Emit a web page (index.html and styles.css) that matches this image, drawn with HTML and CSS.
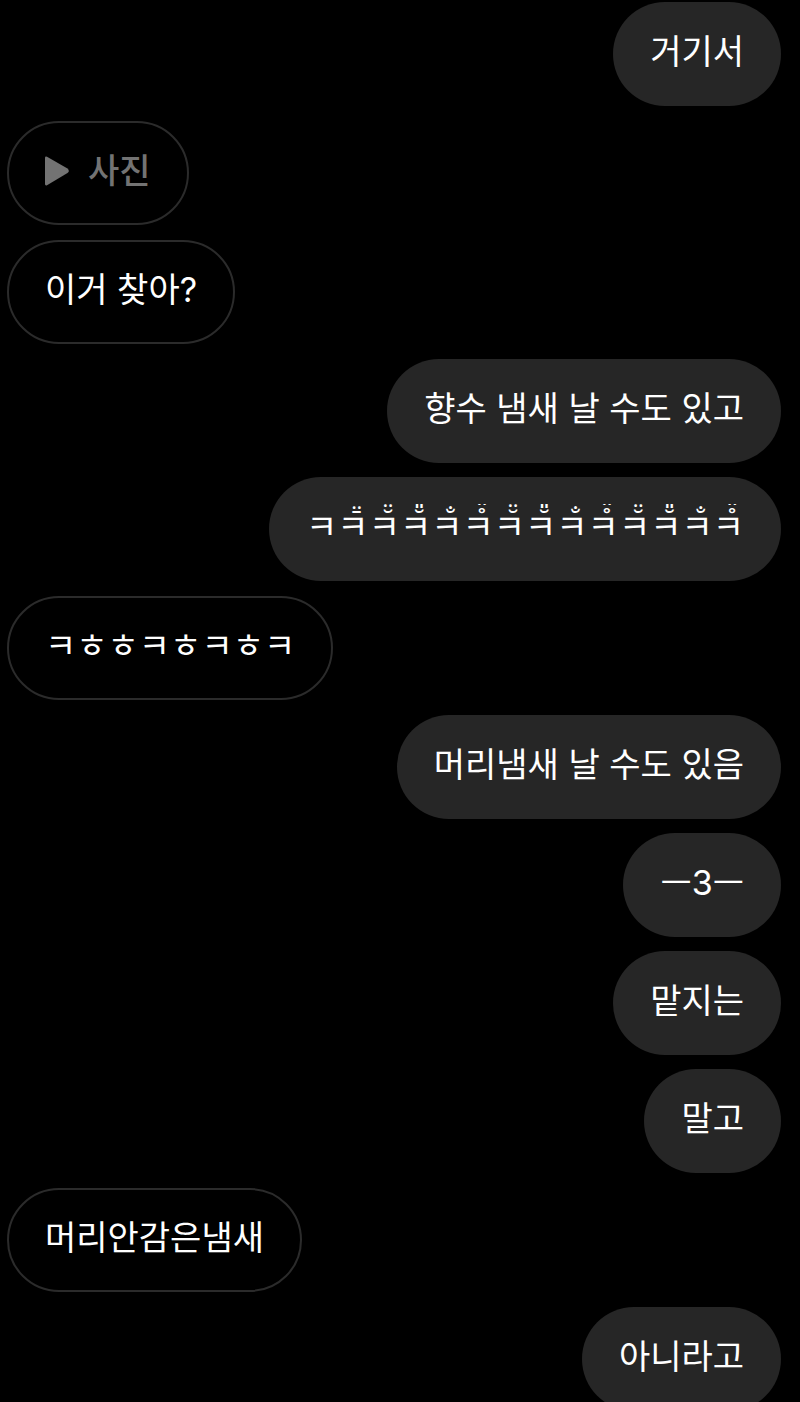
FILE: index.html
```html
<!DOCTYPE html>
<html lang="ko">
<head>
<meta charset="utf-8">
<meta name="viewport" content="width=device-width, initial-scale=1">
<title>대화</title>
<link rel="stylesheet" href="styles.css">
</head>
<body>
<main class="chat">
<p class="bubble sent">거기서</p>
<button class="bubble received photo" type="button"><svg class="play" viewBox="0 0 24 30" aria-hidden="true"><path d="M0 2Q0 0 2 .7L22.500 12.500Q25.200 15 22.500 17L2 29.300Q0 30 0 28Z"/></svg>사진</button>
<p class="bubble received">이거 찾아?</p>
<p class="bubble sent">향수 냄새 날 수도 있고</p>
<p class="bubble sent"><span class="faces">ㅋ<span class="face">ㅋ<span class="marks">&nbsp;&#x304;&#x308;</span></span><span class="face">ㅋ<span class="marks">&nbsp;&#x306;&#x308;</span></span><span class="face">ㅋ<span class="marks">&nbsp;&#x306;&#x30e;</span></span><span class="face">ㅋ<span class="marks">&nbsp;&#x310;&#x308;</span></span><span class="face">ㅋ<span class="marks">&nbsp;&#x30a;&#x308;</span></span><span class="face">ㅋ<span class="marks">&nbsp;&#x306;&#x308;</span></span><span class="face">ㅋ<span class="marks">&nbsp;&#x306;&#x30e;</span></span><span class="face">ㅋ<span class="marks">&nbsp;&#x310;&#x308;</span></span><span class="face">ㅋ<span class="marks">&nbsp;&#x30a;&#x308;</span></span><span class="face">ㅋ<span class="marks">&nbsp;&#x306;&#x308;</span></span><span class="face">ㅋ<span class="marks">&nbsp;&#x306;&#x30e;</span></span><span class="face">ㅋ<span class="marks">&nbsp;&#x310;&#x308;</span></span><span class="face">ㅋ<span class="marks">&nbsp;&#x30a;&#x308;</span></span></span></p>
<p class="bubble received">ㅋㅎㅎㅋㅎㅋㅎㅋ</p>
<p class="bubble sent">머리냄새 날 수도 있음</p>
<p class="bubble sent">ㅡ3ㅡ</p>
<p class="bubble sent">맡지는</p>
<p class="bubble sent">말고</p>
<p class="bubble received">머리안감은냄새</p>
<p class="bubble sent">아니라고</p>
</main>
</body>
</html>
```
FILE: styles.css
```css
* {
  box-sizing: border-box;
}

body {
  margin: 0;
  background: #000;
}

.chat {
  display: flex;
  flex-direction: column;
  gap: 15px;
  height: 100vh;
  padding: 2px 19px 0 7px;
  overflow: hidden;
}

.bubble {
  display: flex;
  flex-shrink: 0;
  align-items: center;
  min-height: 104px;
  margin: 0;
  padding: 27px 37px 31px;
  border: 0;
  border-radius: 52px;
  color: #fff;
  background: none;
  font: 400 34px/46px Inter, "Noto Sans CJK KR", sans-serif;
}

.sent {
  align-self: flex-end;
  background: #262626;
}

.sent + .sent {
  margin-top: -1px;
}

.received {
  align-self: flex-start;
  padding: 25px 36px 29px;
  border: 2px solid #2b2b2b;
}

.photo {
  gap: 19px;
  color: #737373;
  font-weight: 500;
}

.play {
  width: 24px;
  height: 30px;
  fill: currentColor;
}

.faces {
  overflow: hidden;
}

.face {
  display: inline-block;
  position: relative;
}

.marks {
  position: absolute;
  bottom: 8px;
  left: 0;
  width: 100%;
  font: 28px/46px "Noto Sans", sans-serif;
  text-align: center;
}
```
